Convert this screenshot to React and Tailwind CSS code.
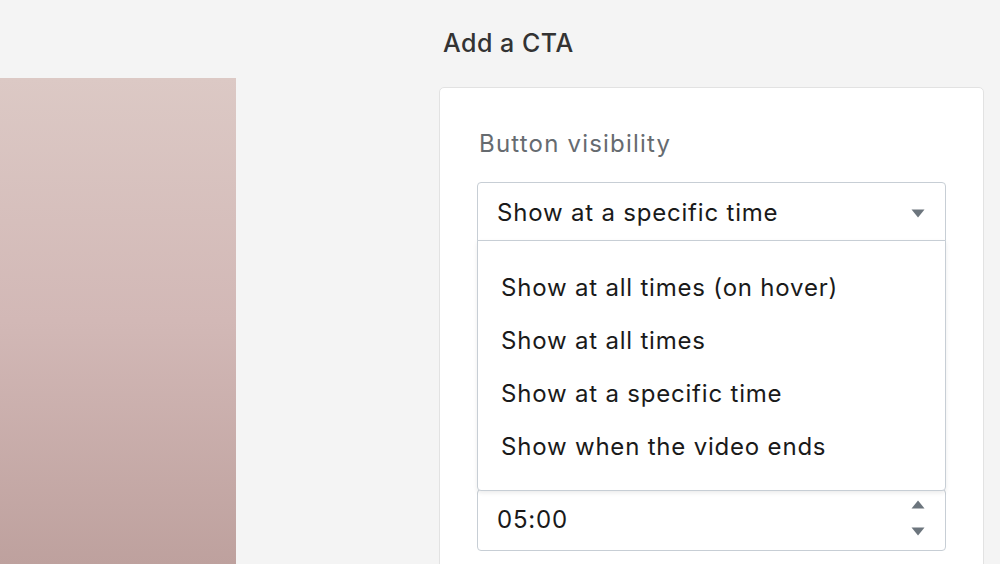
import React from 'react';

const options = [
  'Show at all times (on hover)',
  'Show at all times',
  'Show at a specific time',
  'Show when the video ends',
];

const Triangle = ({ up = false, className = '' }) => (
  <svg className={className} width="14" height="9" viewBox="0 0 14 9" fill="#6c757d">
    {up ? <path d="M7 0.5L13.5 8.5H0.5Z" /> : <path d="M0.5 0.5H13.5L7 8.5Z" />}
  </svg>
);

export default function App() {
  return (
    <div className="flex h-[564px] overflow-hidden bg-[#f4f4f4] font-['Inter',sans-serif]">
      <div className="mt-[78px] w-[236px] shrink-0 bg-gradient-to-b from-[#dcc9c5] via-[#d2b8b6] to-[#bea19e]" />

      <div className="ml-[203px] w-[545px] shrink-0">
        <h2 className="mt-[28px] ml-[4px] text-[25px] leading-[30px] font-medium tracking-[0.02em] text-[#333]">Add a CTA</h2>

        <div className="mt-[29px] h-[520px] rounded-[5px] border border-[#e2e2e2] bg-white px-[37px] pt-[40px]">
          <div className="ml-[2px] text-[24px] leading-[32px] tracking-[0.05em] text-[#666b70]">Button visibility</div>

          <div className="relative mt-[22px] tracking-[0.05em]">
            <div className="flex h-[59px] items-center justify-between rounded-t-[4px] border border-[#c7ced5] pl-[19px] pr-[20px]">
              <span className="pt-[3px] text-[24px] text-[#1a1a1a]">Show at a specific time</span>
              <Triangle className="mt-[4px]" />
            </div>

            <div className="absolute left-0 right-0 top-[58px] z-10 rounded-b-[4px] border border-[#c7ced5] bg-white pt-[20px] pb-[17px] shadow-[0_2px_4px_rgba(0,0,0,0.08)]">
              {options.map((o) => (
                <div key={o} className="h-[53px] pl-[23px] text-[24px] leading-[53px] text-[#1a1a1a]">
                  {o}
                </div>
              ))}
            </div>

            <div className="mt-[248px] flex h-[62px] items-center justify-between rounded-[4px] border border-[#c7ced5] pl-[19px] pr-[20px]">
              <span className="text-[24px] text-[#1a1a1a]">05:00</span>
              <div className="flex flex-col gap-[18px] pb-[4px]">
                <Triangle up />
                <Triangle />
              </div>
            </div>
          </div>
        </div>
      </div>
    </div>
  );
}
